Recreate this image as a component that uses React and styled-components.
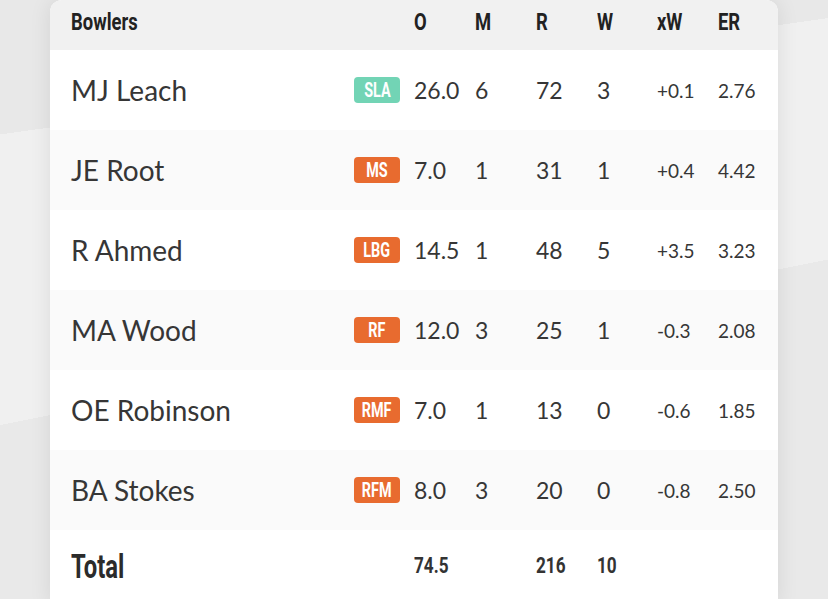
import styled, { createGlobalStyle } from "styled-components";

const bowlers = [
  { name: "MJ Leach", type: "SLA", spin: true, o: "26.0", m: 6, r: 72, w: 3, xw: "+0.1", er: "2.76" },
  { name: "JE Root", type: "MS", o: "7.0", m: 1, r: 31, w: 1, xw: "+0.4", er: "4.42" },
  { name: "R Ahmed", type: "LBG", o: "14.5", m: 1, r: 48, w: 5, xw: "+3.5", er: "3.23" },
  { name: "MA Wood", type: "RF", o: "12.0", m: 3, r: 25, w: 1, xw: "-0.3", er: "2.08" },
  { name: "OE Robinson", type: "RMF", o: "7.0", m: 1, r: 13, w: 0, xw: "-0.6", er: "1.85" },
  { name: "BA Stokes", type: "RFM", o: "8.0", m: 3, r: 20, w: 0, xw: "-0.8", er: "2.50" },
];

const GlobalStyle = createGlobalStyle`
  html, body {
    margin: 0;
    height: 100%;
  }
  body {
    background-color: #f0f0f0;
    background-image:
      linear-gradient(352deg, transparent 81.2%, #e8e8e8 81.2%),
      linear-gradient(168.7deg, transparent 55.6%, #e9e9e9 55.6%);
    overflow: hidden;
  }
`;

const Page = styled.div`
  padding-left: 50px;
`;

const Card = styled.div`
  width: 728px;
  background: #fff;
  border-radius: 12px 12px 0 0;
  box-shadow: 0 0 22px rgba(0, 0, 0, 0.09);
  overflow: hidden;
`;

const Row = styled.div`
  display: grid;
  grid-template-columns: 283px 60px 61px 61px 61px 60px 61px 60px;
  align-items: center;
  padding-left: 21px;
  height: ${(p) => p.$h || 80}px;
  background: ${(p) => p.$bg || "#fff"};
`;

/* no condensed face is installed, so squeeze Roboto bold */
const Condensed = styled.span`
  display: inline-block;
  font-family: Roboto, "Liberation Sans", sans-serif;
  font-weight: 700;
  font-size: ${(p) => p.$size}px;
  color: ${(p) => p.$color || "#222"};
  transform: scaleX(${(p) => p.$sx || 0.8});
  transform-origin: ${(p) => (p.$center ? "center" : "left")} center;
  white-space: nowrap;
`;

const HeadCell = styled.div`
  margin-top: -6px;
  line-height: 1;
`;

const Name = styled.div`
  font-family: Lato, sans-serif;
  font-size: 28px;
  color: #363636;
`;

const Badge = styled.span`
  display: inline-flex;
  align-items: center;
  justify-content: center;
  width: 46px;
  height: 26px;
  border-radius: 4px;
  background: ${(p) => (p.$spin ? "#72d4b5" : "#e86b2f")};
  line-height: 1;
`;

const Num = styled.div`
  font-family: Lato, sans-serif;
  font-size: ${(p) => (p.$small ? 19 : 23)}px;
  color: #363636;
`;

const TotalCell = styled.div`
  margin-top: -4px;
  line-height: 1;
`;

export default function App() {
  const heads = ["O", "M", "R", "W", "xW", "ER"];
  return (
    <Page>
      <GlobalStyle />
      <Card>
        <Row $h={50} $bg="#f1f1f1">
          <HeadCell>
            <Condensed $size={23}>Bowlers</Condensed>
          </HeadCell>
          <span />
          {heads.map((h) => (
            <HeadCell key={h}>
              <Condensed $size={23}>{h}</Condensed>
            </HeadCell>
          ))}
        </Row>
        {bowlers.map((b, i) => (
          <Row key={b.name} $bg={i % 2 ? "#fafafa" : "#fff"}>
            <Name>{b.name}</Name>
            <div>
              <Badge $spin={b.spin}>
                <Condensed $size={20} $sx={0.72} $center $color="#fff">
                  {b.type}
                </Condensed>
              </Badge>
            </div>
            <Num>{b.o}</Num>
            <Num>{b.m}</Num>
            <Num>{b.r}</Num>
            <Num>{b.w}</Num>
            <Num $small>{b.xw}</Num>
            <Num $small>{b.er}</Num>
          </Row>
        ))}
        <Row $h={76}>
          <TotalCell>
            <Condensed $size={34} $sx={0.7} $color="#2b2b2b">Total</Condensed>
          </TotalCell>
          <span />
          <TotalCell>
            <Condensed $size={22} $sx={0.78} $color="#333">74.5</Condensed>
          </TotalCell>
          <span />
          <TotalCell>
            <Condensed $size={22} $sx={0.78} $color="#333">216</Condensed>
          </TotalCell>
          <TotalCell>
            <Condensed $size={22} $sx={0.78} $color="#333">10</Condensed>
          </TotalCell>
        </Row>
      </Card>
    </Page>
  );
}
